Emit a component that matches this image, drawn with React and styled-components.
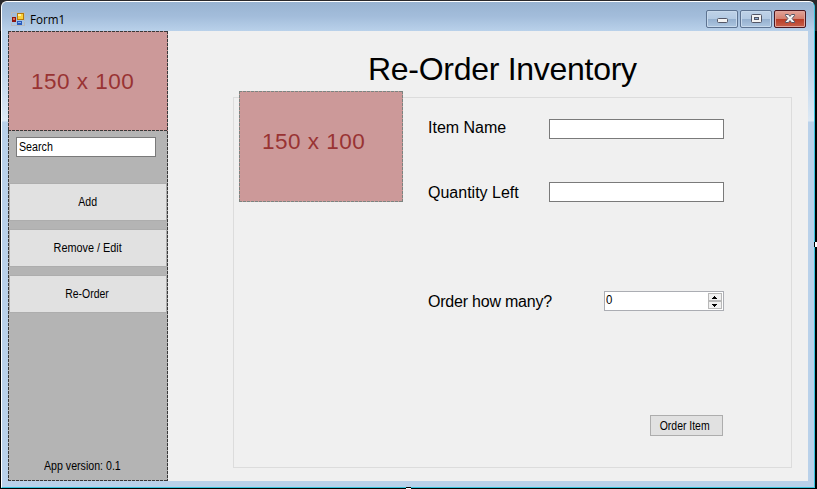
import React from "react";
import styled, { createGlobalStyle, css } from "styled-components";

const GlobalStyle = createGlobalStyle`
  * { box-sizing: border-box; }
  html, body { margin: 0; padding: 0; overflow: hidden; }
  body { font-family: "Liberation Sans", Arial, sans-serif; color: #000; }
`;

/* One-pixel designer outline: three pixels on, one off. */
const dashed = (color) => css`
  background-image:
    repeating-linear-gradient(90deg, ${color} 0 3px, transparent 3px 4px),
    repeating-linear-gradient(90deg, ${color} 0 3px, transparent 3px 4px),
    repeating-linear-gradient(180deg, ${color} 0 3px, transparent 3px 4px),
    repeating-linear-gradient(180deg, ${color} 0 3px, transparent 3px 4px);
  background-size: 100% 1px, 100% 1px, 1px 100%, 1px 100%;
  background-position: 0 0, 0 100%, 0 0, 100% 0;
  background-repeat: no-repeat;
`;

const Desktop = styled.div`
  position: relative;
  width: 817px;
  height: 489px;
  padding: 1px 2px 1px 1px;
  background: linear-gradient(#29282b 0 31px, #000 31px);
`;

const Window = styled.div`
  display: flex;
  flex-direction: column;
  width: 814px;
  height: 487px;
  border: 1px solid #fff;
  border-right-color: #37c3dc;
  border-bottom-color: #37c3dc;
  border-radius: 6px 6px 0 0;
  background: #b9d1ea;
  overflow: hidden;
`;

const TitleBar = styled.header`
  display: flex;
  align-items: flex-start;
  flex: 0 0 29px;
  padding: 8px 8px 0 9px;
  background: linear-gradient(#98b3d1, #a3bddb 50%, #b9d1ea);
`;

const AppIcon = styled.svg`
  display: block;
  width: 14px;
  height: 14px;
  margin-top: 2px;
`;

const Caption = styled.span`
  flex: 1;
  margin-left: 5px;
  font: 12px/18px "Open Sans", sans-serif;
  white-space: nowrap;
  transform: scaleX(0.97);
  transform-origin: left;
  margin-top: 1px;
`;

const WindowButtons = styled.div`
  display: flex;
  gap: 2px;
`;

const WindowButton = styled.button`
  display: flex;
  align-items: center;
  justify-content: center;
  width: 32px;
  height: 18px;
  padding: 0;
  border: 1px solid ${(p) => (p.$close ? "#4b1720" : "#5d7391")};
  border-radius: 2px;
  box-shadow: inset 0 0 0 1px ${(p) => (p.$close ? "#e0a49b" : "#c7d9ec")};
  background: ${(p) =>
    p.$close
      ? "linear-gradient(#e2a398 0, #d4806f 48%, #b83b25 50%, #c8604a 100%)"
      : "linear-gradient(#bfd2e7 0, #b3cae3 48%, #94afce 50%, #adc6e0 100%)"};
  svg { display: block; }
`;

const Body = styled.div`
  display: flex;
  flex: 0 0 450px;
  padding: 0 6px;
  background: linear-gradient(#b9d1ea 0, #c1d6ec 40px, #dce9f5 89px, #dce9f5 90px, #b9d1ea 91px);
`;

const Client = styled.main`
  display: flex;
  width: 800px;
  height: 450px;
  background: #f0f0f0;
`;

const Sidebar = styled.aside`
  display: flex;
  flex-direction: column;
  width: 160px;
  height: 450px;
  padding: 0 1px 1px;
  background-color: #b4b4b4;
  ${dashed("#383838")}
`;

const Placeholder = styled.div`
  display: flex;
  flex: none;
  width: ${(p) => p.$w}px;
  height: ${(p) => p.$h}px;
  margin: ${(p) => p.$margin};
  padding: 38px 0 0 23px;
  background-color: #cc9999;
  color: #993333;
  font-size: 22.5px;
  line-height: 26px;
  white-space: nowrap;
  letter-spacing: 0.5px;
  ${(p) => dashed(p.$outline)}
`;

const SmallText = styled.span`
  display: inline-block;
  font-size: 12px;
  line-height: 14px;
  white-space: nowrap;
  transform: scaleX(${(p) => p.$scale});
  transform-origin: ${(p) => p.$origin || "center"};
`;

const TextBox = styled.div`
  display: flex;
  align-items: center;
  flex: none;
  width: ${(p) => p.$w}px;
  height: 20px;
  padding-left: 2px;
  border: 1px solid #7a7a7a;
  background: #fff;
`;

const SearchArea = styled.div`
  padding: 6px 0 26px 7px;
`;

const Menu = styled.nav`
  display: flex;
  flex-direction: column;
  gap: 8px;
`;

const Button = styled.button`
  display: flex;
  align-items: center;
  justify-content: center;
  width: ${(p) => p.$w}px;
  height: ${(p) => p.$h}px;
  padding: 0 ${(p) => p.$nudge || 0}px 0 0;
  border: 1px solid #adadad;
  background: #e1e1e1;
  color: #000;
  font-family: inherit;
`;

const Version = styled.footer`
  margin: auto 0 7px 35px;
  line-height: 14px;
`;

const Content = styled.section`
  flex: 1;
  padding: 18px 0 0 65px;
`;

const Heading = styled.h1`
  margin: 0 0 12px 135px;
  height: 36px;
  font-size: 32px;
  font-weight: 400;
  line-height: 40px;
  letter-spacing: -0.28px;
  white-space: nowrap;
`;

const Group = styled.div`
  display: flex;
  width: 559px;
  height: 371px;
  border: 1px solid #dcdcdc;
`;

const Fields = styled.div`
  display: flex;
  flex-direction: column;
  width: 296px;
  margin-left: 25px;
  padding-top: 21px;
`;

const Field = styled.div`
  display: flex;
  justify-content: space-between;
  height: 20px;
  margin-bottom: ${(p) => p.$after}px;
`;

const Label = styled.label`
  font-size: 16px;
  line-height: 18px;
  white-space: nowrap;
  letter-spacing: ${(p) => p.$spacing || 0}px;
  margin-top: ${(p) => p.$top || 0}px;
`;

const NumberBox = styled.div`
  display: flex;
  justify-content: space-between;
  width: 120px;
  height: 20px;
  padding: 1px;
  border: 1px solid #abadb3;
  background: #fff;
`;

const Spinner = styled.div`
  display: flex;
  flex-direction: column;
  width: 14px;
  height: 16px;
`;

const SpinButton = styled.button`
  display: flex;
  align-items: center;
  justify-content: center;
  width: 14px;
  height: 8px;
  padding: 0 1px 0 0;
  border: 1px solid #b8b8b8;
  background: #f0f0f0;
`;

const Actions = styled.div`
  display: flex;
  justify-content: flex-end;
  padding-right: 1px;
`;

const Handle = styled.i`
  position: absolute;
  background: #fff;
  border: 0 solid #000;
  ${(p) =>
    p.$side === "right"
      ? "left: 814px; top: 242px; width: 3px; height: 5px; border-left-width: 1px;"
      : "left: 406px; top: 487px; width: 5px; height: 2px; border-top-width: 1px;"}
`;

const FormIcon = () => (
  <AppIcon viewBox="0 0 14 14" shapeRendering="crispEdges">
    <path d="M.5 4.5V.5h5M.5 10.5v3h13v-4M9.5.5h4v8" fill="none" stroke="#b8bbbd" />
    <rect x="1" y="5" width="4" height="5" fill="#8e1710" />
    <rect x="2" y="6" width="2" height="2" fill="#e06a50" />
    <rect x="6" y="1" width="7" height="7" fill="#b77a0b" />
    <rect x="7" y="2" width="5" height="5" fill="#fbd23b" />
    <rect x="7" y="2" width="3" height="2" fill="#fff0a2" />
    <rect x="6" y="9" width="5" height="4" fill="#285bbd" />
    <rect x="7" y="10" width="3" height="1" fill="#8bb5f4" />
  </AppIcon>
);

const MinimizeIcon = () => (
  <svg width="12" height="12" viewBox="0 0 12 12">
    <rect x="1.5" y="5.5" width="10" height="4" rx="1" fill="#f3f3f3" stroke="#535666" />
  </svg>
);

const MaximizeIcon = () => (
  <svg width="12" height="12" viewBox="0 0 12 12">
    <rect x="1.5" y="1.5" width="10" height="8" rx="1" fill="#f3f3f3" stroke="#535666" />
    <rect x="4.5" y="4.5" width="4" height="2" fill="#8fadd1" stroke="#535666" />
  </svg>
);

const CloseIcon = () => (
  <svg width="12" height="12" viewBox="0 0 12 12">
    <path
      d="M1.5 1.5H4.4L6 3.4 7.6 1.5H10.5V2.6L8.1 5.5 10.5 8.4V9.5H7.6L6 7.6 4.4 9.5H1.5V8.4L3.9 5.5 1.5 2.6Z"
      fill="#f5f5f5"
      stroke="#535666"
    />
  </svg>
);

const Arrow = ({ down }) => (
  <svg width="5" height="3" viewBox="0 0 5 3" shapeRendering="crispEdges">
    <path d={down ? "M0 0h5v1H4v1H3v1H2V2H1V1H0z" : "M2 0h1v1h1v1h1v1H0V2h1V1h1z"} fill="#000" />
  </svg>
);

const menuItems = [
  { label: "Add", scale: 0.88 },
  { label: "Remove / Edit", scale: 0.905 },
  { label: "Re-Order", scale: 0.87 },
];

export default function App() {
  return (
    <Desktop>
      <GlobalStyle />
      <Window>
        <TitleBar>
          <FormIcon />
          <Caption>Form1</Caption>
          <WindowButtons>
            <WindowButton aria-label="Minimize"><MinimizeIcon /></WindowButton>
            <WindowButton aria-label="Maximize"><MaximizeIcon /></WindowButton>
            <WindowButton $close aria-label="Close"><CloseIcon /></WindowButton>
          </WindowButtons>
        </TitleBar>
        <Body>
          <Client>
            <Sidebar>
              <Placeholder $w={160} $h={100} $margin="0 -1px" $outline="#383838">150 x 100</Placeholder>
              <SearchArea>
                <TextBox $w={140}>
                  <SmallText $scale={0.89} $origin="left">Search</SmallText>
                </TextBox>
              </SearchArea>
              <Menu>
                {menuItems.map((item) => (
                  <Button key={item.label} $w={158} $h={38} $nudge={1}>
                    <SmallText $scale={item.scale}>{item.label}</SmallText>
                  </Button>
                ))}
              </Menu>
              <Version>
                <SmallText $scale={0.885} $origin="left">App version: 0.1</SmallText>
              </Version>
            </Sidebar>
            <Content>
              <Heading>Re-Order Inventory</Heading>
              <Group>
                <Placeholder $w={164} $h={111} $margin="-7px 0 0 5px" $outline="#7c8480">150 x 100</Placeholder>
                <Fields>
                  <Field $after={43}>
                    <Label>Item Name</Label>
                    <TextBox $w={175} />
                  </Field>
                  <Field $after={89}>
                    <Label $top={2}>Quantity Left</Label>
                    <TextBox $w={175} />
                  </Field>
                  <Field $after={104}>
                    <Label $top={2} $spacing={-0.22}>Order how many?</Label>
                    <NumberBox>
                      <SmallText $scale={0.95} $origin="left">0</SmallText>
                      <Spinner>
                        <SpinButton aria-label="Increase"><Arrow /></SpinButton>
                        <SpinButton aria-label="Decrease"><Arrow down /></SpinButton>
                      </Spinner>
                    </NumberBox>
                  </Field>
                  <Actions>
                    <Button $w={73} $h={21} $nudge={3}>
                      <SmallText $scale={0.87}>Order Item</SmallText>
                    </Button>
                  </Actions>
                </Fields>
              </Group>
            </Content>
          </Client>
        </Body>
      </Window>
      <Handle $side="right" />
      <Handle $side="bottom" />
    </Desktop>
  );
}
